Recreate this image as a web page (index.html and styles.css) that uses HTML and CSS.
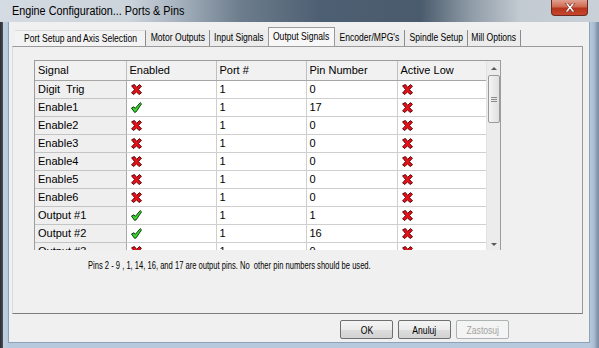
FILE: index.html
```html
<!DOCTYPE html>
<html lang="en">
<head>
    <meta charset="UTF-8">
    <title>Engine Configuration... Ports &amp; Pins</title>
    <link rel="stylesheet" href="styles.css">
</head>
<body>
    <div class="window">
        <div class="titlebar">
            <span class="title">Engine Configuration... Ports &amp; Pins</span>
            <span class="close">
                <svg width="12" height="9" viewBox="0 0 12 9">
                    <path d="M1 0 L4 0 L6 3 L8 0 L11 0 L7.5 4.5 L11 9 L8 9 L6 6 L4 9 L1 9 L4.5 4.5 Z" fill="#fff" stroke="#7a2a1e" stroke-width="0.8"/>
                </svg>
            </span>
        </div>
        <div class="client">
            <div class="tabs">
                <span class="tab first" style="width:131px"><span class="nar">Port Setup and Axis Selection</span></span>
                <span class="tab" style="width:64px"><span class="nar">Motor Outputs</span></span>
                <span class="tab" style="width:59px"><span class="nar">Input Signals</span></span>
                <span class="tab active" style="width:67px"><span class="nar">Output Signals</span></span>
                <span class="tab" style="width:70px"><span class="nar">Encoder/MPG's</span></span>
                <span class="tab" style="width:63px"><span class="nar">Spindle Setup</span></span>
                <span class="tab" style="width:53px"><span class="nar">Mill Options</span></span>
            </div>
            <div class="panel">
                <div class="grid">
                    <div class="table-wrap">
                        <table>
                            <thead>
                                <tr><th class="c-sig">Signal</th><th class="c-en">Enabled</th><th class="c-port">Port #</th><th class="c-pin">Pin Number</th><th class="c-act">Active Low</th></tr>
                            </thead>
                            <tbody id="rows"></tbody>
                        </table>
                    </div>
                    <div class="scrollbar">
                        <span class="arrow up"></span>
                        <span class="thumb"><i></i><i></i><i></i></span>
                        <span class="track"></span>
                        <span class="arrow down"></span>
                    </div>
                </div>
                <p class="note">Pins 2 - 9 , 1, 14, 16, and 17 are output pins. No&nbsp; other pin numbers should be used.</p>
            </div>
            <div class="buttons">
                <button class="btn"><span class="nar">OK</span></button>
                <button class="btn"><span class="nar">Anuluj</span></button>
                <button class="btn disabled"><span class="nar">Zastosuj</span></button>
            </div>
        </div>
    </div>

    <script>
        // signal table data: name, enabled, port, pin, active low
        const rows = [
            ["Digit&nbsp; Trig", 0, 1, 0, 0],
            ["Enable1", 1, 1, 17, 0],
            ["Enable2", 0, 1, 0, 0],
            ["Enable3", 0, 1, 0, 0],
            ["Enable4", 0, 1, 0, 0],
            ["Enable5", 0, 1, 0, 0],
            ["Enable6", 0, 1, 0, 0],
            ["Output #1", 1, 1, 1, 0],
            ["Output #2", 1, 1, 16, 0],
            ["Output #3", 0, 1, 0, 0]
        ];

        const cross = '<svg class="ico" width="11" height="11" viewBox="0 0 11 11"><path d="M0.6 1.8 L3.4 0.5 L5.7 3.4 L8.4 0.6 L10.4 2.2 L7.4 5.6 L10.5 8.8 L8 10.5 L5.5 7.8 L2.8 10.5 L0.6 8.9 L3.6 5.6 Z" fill="#ea1019" stroke="#5e0306" stroke-width="1" stroke-linejoin="round"/></svg>';
        const check = '<svg class="ico" width="11" height="11" viewBox="0 0 11 11"><path d="M0.5 6 L3 4.8 L4.3 6.4 L9.2 0.6 L10.5 1.8 L5.2 9.8 L3.6 10.4 Z" fill="#3bd833" stroke="#0b420a" stroke-width="1" stroke-linejoin="round"/></svg>';

        let html = "";
        rows.forEach(r => {
            html += `<tr><th>${r[0]}</th><td>${r[1] ? check : cross}</td><td>${r[2]}</td><td>${r[3]}</td><td>${r[4] ? check : cross}</td></tr>`;
        });
        document.getElementById("rows").innerHTML = html;
    </script>
</body>
</html>
```

FILE: styles.css
```css
* {
    box-sizing: border-box;
}
html, body {
    margin: 0;
    padding: 0;
    width: 599px;
    height: 348px;
    overflow: hidden;
}
body {
    font-family: "Liberation Sans", Arial, sans-serif;
    font-size: 11px;
    color: #000;
    background: linear-gradient(to right, #2b2d33 0, #4a4e56 3px, #c3d2e1 3px, #b7c9dc 8px, #b7c9dc 590px, #a8bdd3 594px, #7d8fa3 598px);
}
.window {
    display: flex;
    flex-direction: column;
    height: 100%;
}
.titlebar {
    height: 22px;
    flex: none;
    display: flex;
    align-items: flex-start;
    padding-left: 12px;
    background: linear-gradient(to right, #d4dbe2 0, #cbd3db 130px, #a9b5c1 175px, #6d7d8d 240px, #4d5f72 320px, #4a5b6d 420px, #8e9aa6 470px, #c2cad2 520px, #c9d0d7 599px);
}
.title {
    font-size: 12px;
    line-height: 22px;
    white-space: nowrap;
    transform: scaleX(0.9);
    transform-origin: left center;
}
.close {
    margin-left: auto;
    margin-right: 11px;
    width: 37px;
    height: 16px;
    display: flex;
    align-items: center;
    justify-content: center;
    border: 1px solid #6b2a22;
    border-top: none;
    border-radius: 0 0 4px 4px;
    background: linear-gradient(#e0a191 0, #d06a52 45%, #b6341c 55%, #c8462c 100%);
}
.client {
    flex: 1;
    margin: 0 9px 5px 8px;
    background: #f0f0f0;
    border: 1px solid #8fa3b8;
    border-top: none;
    display: flex;
    flex-direction: column;
}
.nar {
    display: inline-block;
    white-space: nowrap;
    transform: scaleX(0.78);
}
.tabs {
    display: flex;
    align-items: flex-end;
    height: 24px;
    padding-left: 6px;
}
.tab {
    font-size: 11px;
    height: 16px;
    line-height: 15px;
    display: flex;
    justify-content: center;
    border-right: 1px solid #8c8c8c;
    background: #ececec;
}
.tab.first {
    background: #f3f3f3;
    border-top: 1px solid #dcdcdc;
}
.tab.active {
    height: 19px;
    line-height: 17px;
    background: #f7f7f7;
    border: 1px solid #9a9a9a;
    border-bottom: none;
    margin-left: -1px;
    position: relative;
    z-index: 1;
}
.panel {
    margin: 0 6px 0 3px;
    height: 268px;
    border: 1px solid #9a9a9a;
    border-bottom-color: #7d7d7d;
    border-left-color: #dadada;
    background: #f0f0f0;
    padding: 13px 0 0 21px;
}
.grid {
    display: flex;
    width: 467px;
    height: 190px;
    border: 1px solid #9c9c9c;
    border-bottom: none;
    background: #fff;
}
.table-wrap {
    width: 452px;
    overflow: hidden;
}
table {
    border-collapse: collapse;
    table-layout: fixed;
    width: 452px;
}
th, td {
    height: 18px;
    padding: 0 0 0 3px;
    text-align: left;
    font-weight: normal;
    white-space: nowrap;
    border-right: 1px solid #cfcfcf;
    border-bottom: 1px solid #cfcfcf;
    vertical-align: middle;
}
thead th {
    height: 19px;
    background: #f1f1f1;
    border-right: 1px solid #bfbfbf;
    border-bottom: 1px solid #a6a6a6;
}
tbody th {
    background: #efefef;
    border-right: 1px solid #a9a9a9;
    border-bottom: 1px solid #c4c4c4;
}
.c-sig { width: 91px; }
.c-en { width: 90px; }
.c-port { width: 90px; }
.c-pin { width: 91px; }
.c-act { width: 90px; }
.ico {
    display: block;
    margin: 0 0 0 1px;
}
.scrollbar {
    width: 14px;
    display: flex;
    flex-direction: column;
    align-items: center;
    background: #ececec;
    border-left: 1px solid #e2e2e2;
}
.arrow {
    width: 0;
    height: 0;
    border-left: 3px solid transparent;
    border-right: 3px solid transparent;
    margin: 6px 0 5px;
}
.arrow.up {
    border-bottom: 3px solid #5a5a5a;
}
.arrow.down {
    border-top: 3px solid #5a5a5a;
    margin: 3px 0 4px;
}
.thumb {
    width: 12px;
    height: 48px;
    border: 1px solid #9a9a9a;
    border-radius: 2px;
    background: linear-gradient(to right, #f4f4f4, #e0e0e0);
    display: flex;
    flex-direction: column;
    align-items: center;
    justify-content: center;
    gap: 1px;
}
.thumb i {
    width: 6px;
    height: 1px;
    background: #8a8a8a;
}
.track {
    flex: 1;
}
.note {
    margin: 9px 0 0 54px;
    font-size: 11px;
    white-space: nowrap;
    transform: scaleX(0.69);
    transform-origin: left center;
}
.buttons {
    display: flex;
    justify-content: flex-end;
    gap: 5px;
    padding: 6px 80px 0 0;
}
.btn {
    width: 53px;
    height: 19px;
    padding: 0;
    display: flex;
    align-items: center;
    justify-content: center;
    font-family: "Liberation Sans", Arial, sans-serif;
    font-size: 11px;
    color: #000;
    border: 1px solid #707070;
    border-radius: 2px;
    background: linear-gradient(#f4f4f4 0, #ebebeb 50%, #dddddd 51%, #d2d2d2 100%);
}
.btn.disabled {
    color: #a3a3a3;
    border-color: #adb2b5;
    background: #f4f4f4;
}
```
